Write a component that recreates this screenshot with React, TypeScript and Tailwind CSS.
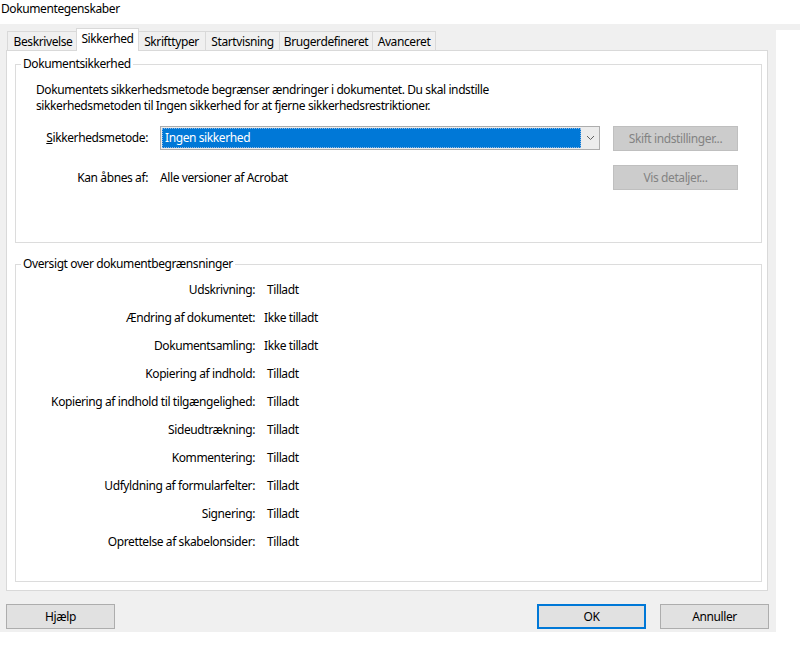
import React from "react";

const rows: [string, string][] = [
  ["Udskrivning:", "Tilladt"],
  ["Ændring af dokumentet:", "Ikke tilladt"],
  ["Dokumentsamling:", "Ikke tilladt"],
  ["Kopiering af indhold:", "Tilladt"],
  ["Kopiering af indhold til tilgængelighed:", "Tilladt"],
  ["Sideudtrækning:", "Tilladt"],
  ["Kommentering:", "Tilladt"],
  ["Udfyldning af formularfelter:", "Tilladt"],
  ["Signering:", "Tilladt"],
  ["Oprettelse af skabelonsider:", "Tilladt"],
];

function Tab({ label, w, selected, last }: { label: string; w: string; selected?: boolean; last?: boolean }) {
  if (selected) {
    return (
      <div
        className={`relative z-10 -mx-[2px] -mb-px h-[23px] ${w} border-x border-t border-[#d9d9d9] bg-white pt-[2px] text-center`}
      >
        {label}
      </div>
    );
  }
  return (
    <div
      className={`h-[19px] ${w} border-l border-t ${last ? "border-r" : ""} border-[#d9d9d9] bg-[#f0f0f0] pt-[2px] text-center`}
    >
      {label}
    </div>
  );
}

export default function App() {
  return (
    <div className="h-[648px] w-[800px] overflow-hidden bg-white font-['Noto_Sans',sans-serif] text-[12px] leading-[16px] tracking-[-0.4px] text-black">
      <div className="h-[24px] pl-[1px] pt-[1px]">Dokumentegenskaber</div>
      <div className="flex">
        <div className="h-[608px] w-[776px] bg-[#f0f0f0] pt-[4px]">
          {/* tabs */}
          <div className="flex h-[22px] items-end pl-[7px]">
            <Tab label="Beskrivelse" w="w-[71px]" />
            <Tab label="Sikkerhed" w="w-[63px]" selected />
            <Tab label="Skrifttyper" w="w-[68px]" />
            <Tab label="Startvisning" w="w-[74px]" />
            <Tab label="Brugerdefineret" w="w-[93px]" />
            <Tab label="Avanceret" w="w-[64px]" last />
          </div>
          {/* tab page */}
          <div className="ml-[6px] h-[541px] w-[762px] border border-[#d9d9d9] bg-white pl-[8px]">
            <fieldset className="mt-[5px] h-[187px] w-[747px] border border-[#dcdcdc]">
              <legend className="ml-[5px] px-[2px]">Dokumentsikkerhed</legend>
              <div className="pl-[20px] pt-[10px]">
                <p>
                  Dokumentets sikkerhedsmetode begrænser ændringer i dokumentet. Du skal indstille
                  <br />
                  sikkerhedsmetoden til Ingen sikkerhed for at fjerne sikkerhedsrestriktioner.
                </p>
                <div className="mt-[12px] flex h-[25px] items-start">
                  <div className="flex h-[24px] w-[112px] items-center justify-end">
                    <span>
                      <span className="underline">S</span>ikkerhedsmetode:
                    </span>
                  </div>
                  <div className="ml-[12px] flex h-[24px] w-[440px] items-center border border-[#adadad] bg-[#ececec] pl-[1px]">
                    <div className="flex h-[20px] w-[419px] items-center border border-dotted border-[#8fb6e0] bg-[#0078d7] pl-[2px] text-white">
                      Ingen sikkerhed
                    </div>
                    <div className="flex flex-1 items-center justify-center">
                      <svg width="9" height="6" viewBox="0 0 9 6">
                        <path d="M1 1 L4.5 4.5 L8 1" fill="none" stroke="#606060" strokeWidth="1" />
                      </svg>
                    </div>
                  </div>
                  <div className="ml-[13px] flex h-[25px] w-[125px] items-center justify-center border border-[#bfbfbf] bg-[#cccccc] text-[#838383]">
                    Skift indstillinger...
                  </div>
                </div>
                <div className="mt-[14px] flex h-[25px] items-center">
                  <div className="w-[112px] text-right">Kan åbnes af:</div>
                  <div className="ml-[12px] w-[440px]">Alle versioner af Acrobat</div>
                  <div className="ml-[13px] flex h-[25px] w-[125px] items-center justify-center border border-[#bfbfbf] bg-[#cccccc] text-[#838383]">
                    Vis detaljer...
                  </div>
                </div>
              </div>
            </fieldset>
            <fieldset className="mt-[13px] h-[326px] w-[747px] border border-[#dcdcdc]">
              <legend className="ml-[5px] px-[2px]">Oversigt over dokumentbegrænsninger</legend>
              <div className="pt-[4px]">
                {rows.map(([label, value]) => (
                  <div key={label} className="flex h-[28px] items-center">
                    <div className="w-[239px] text-right">{label}</div>
                    <div className={value === "Tilladt" ? "pl-[12px]" : "pl-[9px]"}>{value}</div>
                  </div>
                ))}
              </div>
            </fieldset>
          </div>
          {/* bottom buttons */}
          <div className="mt-[13px] flex pl-[6px]">
            <div className="flex h-[25px] w-[109px] items-center justify-center border border-[#adadad] bg-[#e1e1e1]">
              Hjælp
            </div>
            <div className="ml-[422px] flex h-[25px] w-[109px] items-center justify-center border-2 border-[#0078d7] bg-[#e1e1e1]">
              OK
            </div>
            <div className="ml-[14px] flex h-[25px] w-[109px] items-center justify-center border border-[#adadad] bg-[#e1e1e1]">
              Annuller
            </div>
          </div>
        </div>
        <div className="flex-1">
          <div className="h-[6px] bg-[#f0f0f0]" />
        </div>
      </div>
    </div>
  );
}
